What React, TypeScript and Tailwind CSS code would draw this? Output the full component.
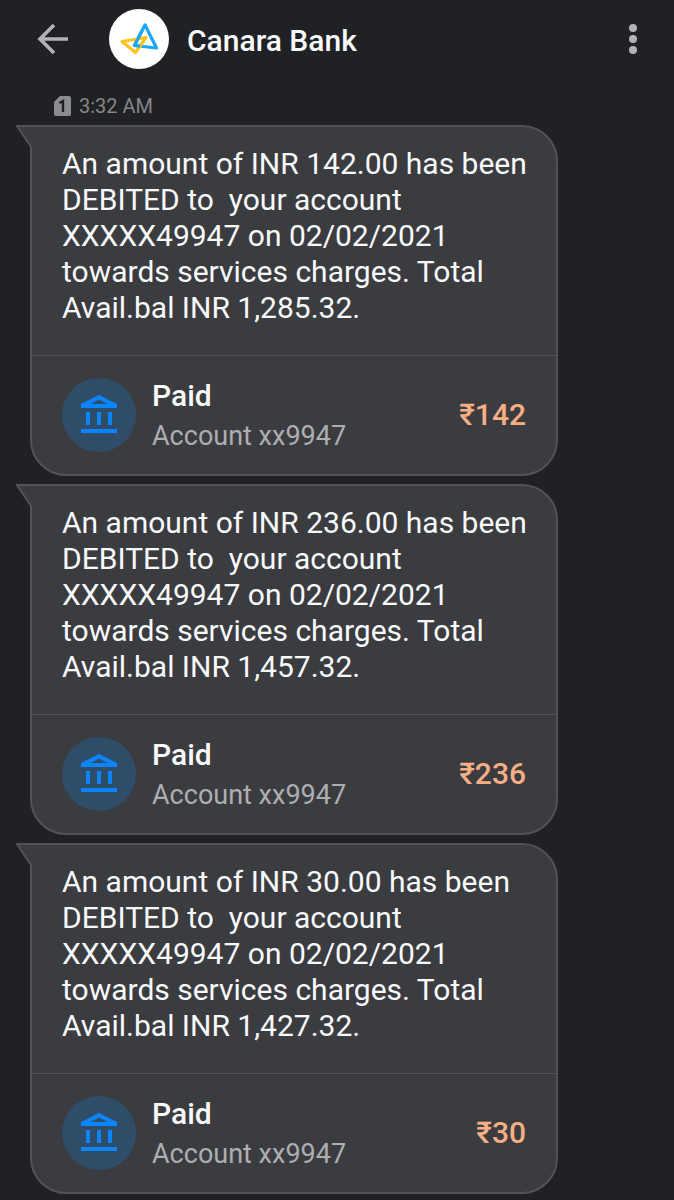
const messages = [
  { amount: "142.00", balance: "1,285.32", paid: "₹142" },
  { amount: "236.00", balance: "1,457.32", paid: "₹236" },
  { amount: "30.00", balance: "1,427.32", paid: "₹30" },
];

function BackIcon() {
  return (
    <svg viewBox="0 0 32 32" className="size-8" fill="none" stroke="#b2b3b7" strokeWidth="3.600" aria-hidden="true">
      <path d="M31 16H3M17 2L3 16L17 30" />
    </svg>
  );
}

function MoreIcon() {
  return (
    <svg viewBox="0 0 8 32" className="h-8 w-2" fill="#b2b3b7" aria-hidden="true">
      <circle cx="4" cy="5" r="4" />
      <circle cx="4" cy="16" r="4" />
      <circle cx="4" cy="27" r="4" />
    </svg>
  );
}

function BankLogo() {
  return (
    <svg viewBox="0 0 60 60" className="size-[60px]" fill="none" strokeLinejoin="round" aria-hidden="true">
      <circle cx="30" cy="30" r="30" fill="#fff" />
      <path d="M36 16L47.500 39L25.500 36.500Z" stroke="#18a8f5" strokeWidth="3.200" />
      <path d="M13 32.500L37 28.500L26.500 43.500Z" stroke="#fdc41f" strokeWidth="3.200" />
      <path d="M33 21.500L25.500 36.500L31 37.100" stroke="#18a8f5" strokeWidth="3.200" />
    </svg>
  );
}

function SimIcon() {
  return (
    <svg viewBox="0 0 17 20" className="h-5 w-[17px]" aria-hidden="true">
      <path d="M6 0H15Q17 0 17 2V18Q17 20 15 20H2Q0 20 0 18V6Z" fill="#8b8c8f" />
      <path d="M5.500 7L9 5V16" fill="none" stroke="#202124" strokeWidth="2.400" />
    </svg>
  );
}

function BankIcon() {
  return (
    <svg viewBox="0 0 36 41" className="h-[41px] w-9" fill="#0a84ff" aria-hidden="true">
      <path fillRule="evenodd" d="M18 0L36 9V13H0V9ZM18 4.500L9.500 9H26.500Z" />
      <path d="M5 17H9V30H5ZM16 17H20V30H16ZM27 17H31V30H27ZM0 34H36V38H0Z" />
    </svg>
  );
}

function Message({ amount, balance, paid }: { amount: string; balance: string; paid: string }) {
  return (
    <article className="relative rounded-[36px] rounded-tl-none border-2 border-[#525356] bg-[#3b3c3f]">
      <svg viewBox="0 0 18 26" className="absolute -top-0.5 -left-[17px] h-[26px] w-[18px]" aria-hidden="true">
        <path d="M18 1H2L16 22V26H18Z" fill="#3b3c3f" />
        <path d="M18 1H2L16 22V26" fill="none" stroke="#525356" strokeWidth="2" />
      </svg>
      <p className="pt-[19px] pr-5 pb-[29px] pl-[30px] text-[30px] leading-9 whitespace-pre-line">
        An amount of INR {amount} has been{"\n"}DEBITED to &nbsp;your account{"\n"}XXXXX49947 on 02/02/2021{"\n"}
        towards services charges. Total{"\n"}Avail.bal INR {balance}.
      </p>
      <footer className="flex items-center gap-4 border-t border-[#525356] px-[30px] py-[18px]">
        <span className="flex size-[74px] shrink-0 items-center justify-center rounded-full bg-[#2f4d69]">
          <BankIcon />
        </span>
        <div className="grow pt-0.5">
          <h2 className="text-[30px] leading-10 font-medium">Paid</h2>
          <p className="text-[27px] leading-10 text-[#adaeb1]">Account xx9947</p>
        </div>
        <strong className="text-[30px] leading-9 font-medium text-[#f6ae84]">{paid}</strong>
      </footer>
    </article>
  );
}

export default function App() {
  return (
    <main className="min-h-screen bg-[#202124] font-[Roboto,sans-serif] text-[#f8f9fa]">
      <header className="flex items-center border-b border-[#1c1d20] px-[37px] pt-[9px] pb-[22px]">
        <button type="button" aria-label="Back">
          <BackIcon />
        </button>
        <div className="ml-10 flex grow items-center gap-[18px]">
          <BankLogo />
          <h1 className="pt-1 text-[30px] leading-9 font-medium">Canara Bank</h1>
        </div>
        <button type="button" aria-label="More options">
          <MoreIcon />
        </button>
      </header>
      <section className="pr-[116px] pb-1.5 pl-[30px]">
        <div className="flex h-[33px] items-center gap-2 pt-0.5 pb-2 pl-6 text-[#85868a]">
          <SimIcon />
          <time className="text-[20px] leading-6">3:32 AM</time>
        </div>
        <div className="flex flex-col gap-2">
          {messages.map((m) => (
            <Message key={m.paid} {...m} />
          ))}
        </div>
      </section>
    </main>
  );
}
